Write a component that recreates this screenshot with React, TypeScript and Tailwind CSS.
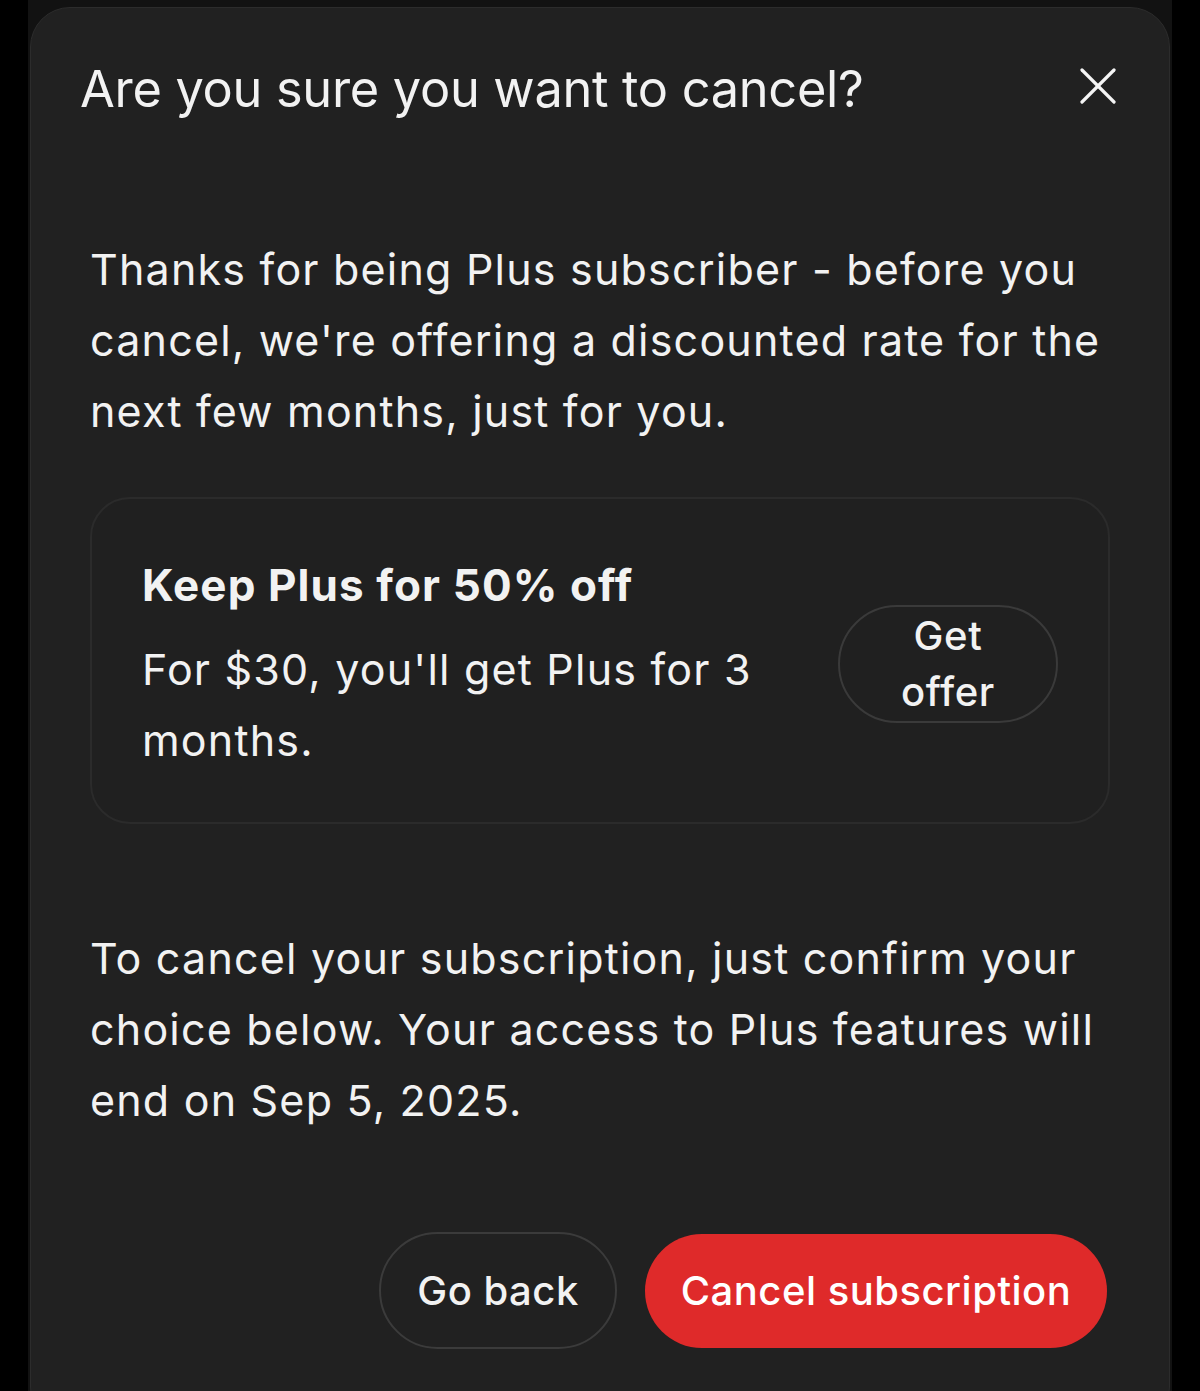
import React from 'react';

const font = { fontFamily: 'Inter, "Noto Sans", sans-serif' };

const CloseIcon = () => (
  <svg width="36" height="36" viewBox="0 0 36 36" fill="none" stroke="#f5f5f5" strokeWidth="3.2" strokeLinecap="round">
    <path d="M2 2 L34 34" />
    <path d="M34 2 L2 34" />
  </svg>
);

export default function App() {
  return (
    <div className="h-[1391px] overflow-hidden bg-black px-[28px]" style={font}>
      <div className="h-full bg-[#121212] px-[2px] pt-[7px]">
        <div className="h-[1420px] rounded-[40px] border border-[#2c2c2c] bg-[#212121] text-[#f2f2f2]">
          <div className="flex items-start justify-between pl-[49px] pr-[53px] pt-[48px]">
            <h2 className="mt-[3px] text-[50.5px] leading-[60px] font-normal tracking-[-0.3px]">
              Are you sure you want to cancel?
            </h2>
            <button className="mt-[12px]">
              <CloseIcon />
            </button>
          </div>

          <div className="px-[59px]">
            <p className="mt-[115px] text-[43px] leading-[71px] tracking-[1.2px]">
              Thanks for being Plus subscriber - before you cancel, we're offering a discounted rate for the next few
              months, just for you.
            </p>

            <div className="mt-[50px] flex items-center gap-[60px] rounded-[40px] border-2 border-[#2b2b2b] bg-[#202020] pl-[50px] pr-[50px] pt-[58px] pb-[46px]">
              <div className="flex-1">
                <h3 className="text-[44px] leading-[56px] font-bold tracking-[1.1px]">Keep Plus for 50% off</h3>
                <p className="mt-[21px] text-[43px] leading-[71px] tracking-[1.2px]">For $30, you'll get Plus for 3 months.</p>
              </div>
              <button className="-mt-[6px] w-[220px] h-[118px] shrink-0 rounded-full border-2 border-[#3a3a3a] px-[40px] text-[40px] leading-[56px] font-medium tracking-[0.6px]">
                Get offer
              </button>
            </div>

            <p className="mt-[99px] text-[43px] leading-[71px] tracking-[1.2px]">
              To cancel your subscription, just confirm your choice below. Your access to Plus features will end on
              Sep 5, 2025.
            </p>

            <div className="mt-[96px] flex justify-end gap-[28px] pr-[3px]">
              <button className="h-[117px] w-[238px] rounded-full border-2 border-[#3b3b3b] text-[40px] font-medium tracking-[0.5px]">
                Go back
              </button>
              <button className="h-[114px] w-[462px] mt-[2px] rounded-full bg-[#df2a2a] text-[40px] font-medium tracking-[0.5px] text-white">
                Cancel subscription
              </button>
            </div>
          </div>
        </div>
      </div>
    </div>
  );
}
